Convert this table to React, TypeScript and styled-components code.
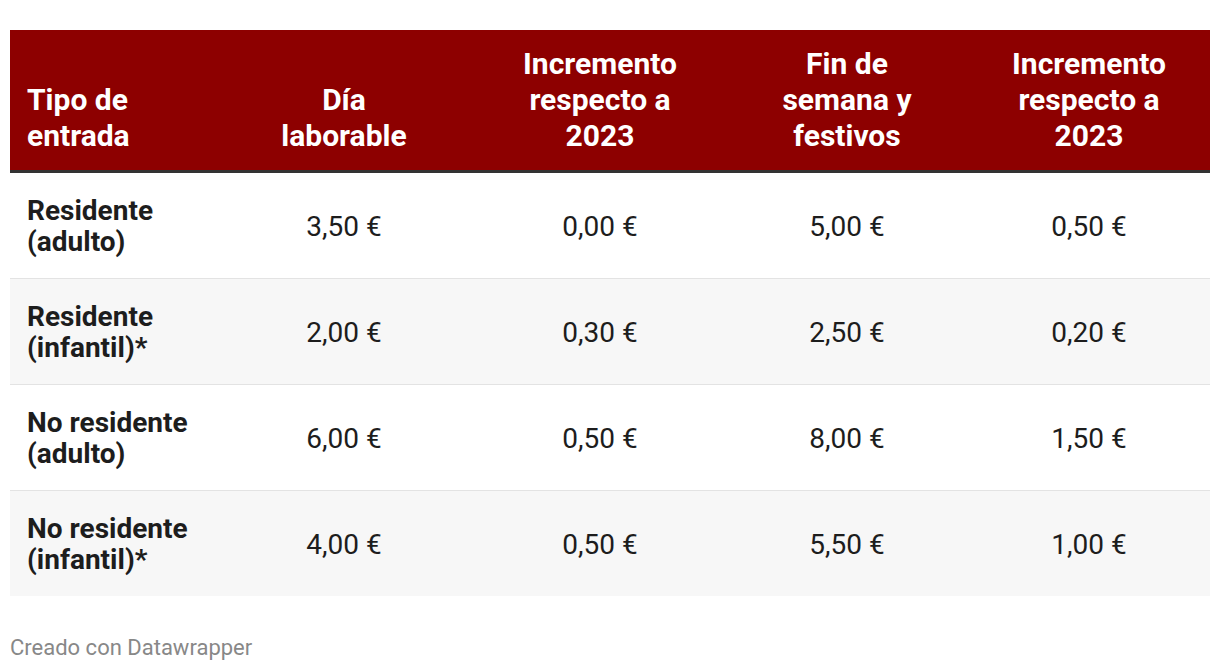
import React from "react";
import styled, { createGlobalStyle } from "styled-components";

const Global = createGlobalStyle`
  html, body { margin: 0; padding: 0; background: #fff; }
  body { font-family: Roboto, "Liberation Sans", sans-serif; }
`;

const Page = styled.div`
  padding: 30px 10px 0 10px;
  width: 1200px;
`;

const Table = styled.table`
  width: 1200px;
  border-collapse: collapse;
  table-layout: fixed;
`;

const HeadCell = styled.th<{ $align?: string }>`
  background: #8d0000;
  color: #fff;
  font-weight: 700;
  font-size: 30px;
  line-height: 36px;
  text-align: ${(p) => p.$align || "center"};
  vertical-align: bottom;
  padding: 0 17px 16px 17px;
  height: 124px;
  border-bottom: 3px solid #333;
`;

const HeadText = styled.span`
  display: inline-block;
  max-width: 168px;
`;

const Row = styled.tr<{ $shade: boolean; $last: boolean }>`
  background: ${(p) => (p.$shade ? "#f7f7f7" : "#fff")};
  border-bottom: ${(p) => (p.$last ? "none" : "1px solid #e3e3e3")};
`;

const LabelCell = styled.td`
  font-weight: 700;
  font-size: 28px;
  line-height: 31px;
  color: #1d1d1d;
  padding: 22px 17px 21px 17px;
  text-align: left;
  vertical-align: middle;
`;

const ValueCell = styled.td`
  font-size: 28px;
  line-height: 31px;
  color: #1d1d1d;
  padding: 22px 17px 21px 17px;
  text-align: center;
  vertical-align: middle;
`;

const Footer = styled.div`
  margin-top: 39px;
  font-size: 22px;
  line-height: 26px;
  color: #888;
`;

const headers = [
  "Tipo de entrada",
  "Día laborable",
  "Incremento respecto a 2023",
  "Fin de semana y festivos",
  "Incremento respecto a 2023",
];

const widths = [204, 260, 252, 242, 242];

const rows: [string, string[]][] = [
  ["Residente (adulto)", ["3,50 €", "0,00 €", "5,00 €", "0,50 €"]],
  ["Residente (infantil)*", ["2,00 €", "0,30 €", "2,50 €", "0,20 €"]],
  ["No residente (adulto)", ["6,00 €", "0,50 €", "8,00 €", "1,50 €"]],
  ["No residente (infantil)*", ["4,00 €", "0,50 €", "5,50 €", "1,00 €"]],
];

export default function App() {
  return (
    <>
      <Global />
      <Page>
        <Table>
          <colgroup>
            {widths.map((w, i) => (
              <col key={i} style={{ width: w }} />
            ))}
          </colgroup>
          <thead>
            <tr>
              {headers.map((h, i) => (
                <HeadCell key={i} $align={i === 0 ? "left" : "center"}>
                  <HeadText>{h}</HeadText>
                </HeadCell>
              ))}
            </tr>
          </thead>
          <tbody>
            {rows.map(([label, vals], i) => (
              <Row key={i} $shade={i % 2 === 1} $last={i === rows.length - 1}>
                <LabelCell>{label}</LabelCell>
                {vals.map((v, j) => (
                  <ValueCell key={j}>{v}</ValueCell>
                ))}
              </Row>
            ))}
          </tbody>
        </Table>
        <Footer>Creado con Datawrapper</Footer>
      </Page>
    </>
  );
}
